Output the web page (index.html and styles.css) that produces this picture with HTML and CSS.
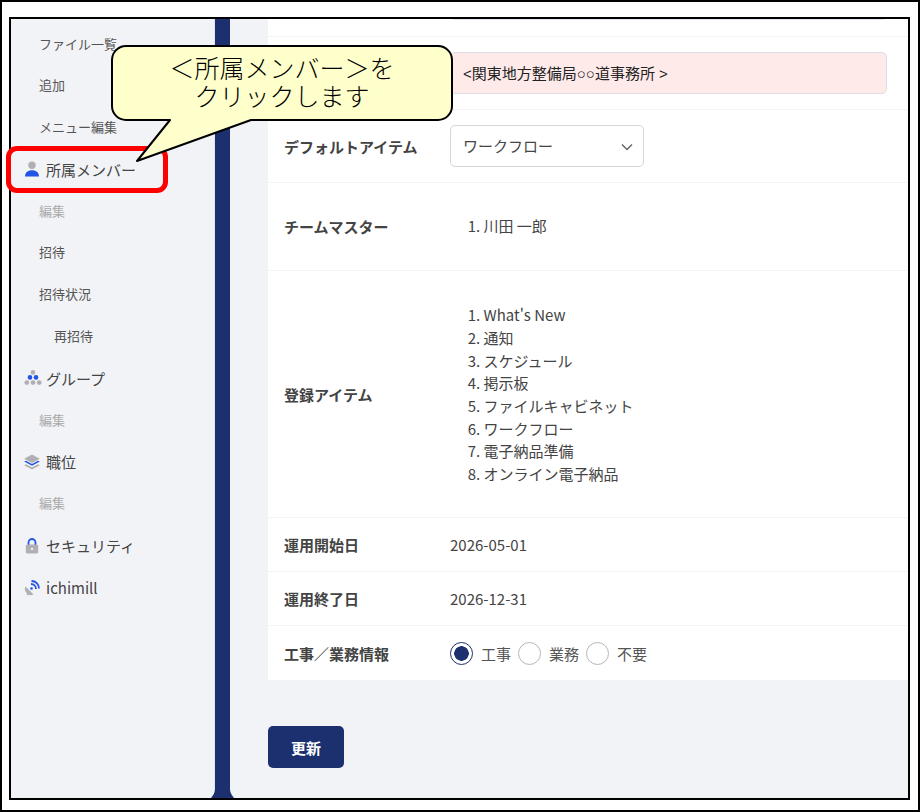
FILE: index.html
```html
<!DOCTYPE html>
<html lang="ja">
<head>
    <meta charset="UTF-8">
    <meta name="viewport" content="width=device-width, initial-scale=1.0">
    <title>所属メンバー</title>
    <link rel="stylesheet" href="styles.css">
</head>
<body>
    <div class="shot-outer">
        <div class="shot-inner">
            <nav class="sidebar">
                <a class="nav-sub">ファイル一覧</a>
                <a class="nav-sub">追加</a>
                <a class="nav-sub">メニュー編集</a>
                <a class="nav-main">
                    <svg class="nav-icon" viewBox="0 0 16 16">
                        <circle cx="8" cy="4.2" r="3.7" fill="#b0b0b4"/>
                        <path d="M1 15.5c0-4 2.6-6.3 7-6.3s7 2.300 7 6.300z" fill="#2454e6"/>
                    </svg>
                    <span>所属メンバー</span>
                </a>
                <a class="nav-sub muted">編集</a>
                <a class="nav-sub">招待</a>
                <a class="nav-sub">招待状況</a>
                <a class="nav-sub nested">再招待</a>
                <a class="nav-main">
                    <svg class="nav-icon nav-icon-wide" viewBox="0 0 18 16">
                        <circle cx="9" cy="2.4" r="2.3" fill="#b0b0b4"/>
                        <circle cx="6" cy="7.4" r="2.3" fill="#2454e6"/>
                        <circle cx="12" cy="7.4" r="2.3" fill="#2454e6"/>
                        <circle cx="2.8" cy="12.6" r="2.4" fill="#b0b0b4"/>
                        <circle cx="9" cy="12.6" r="2.4" fill="#b0b0b4"/>
                        <circle cx="15.2" cy="12.6" r="2.4" fill="#b0b0b4"/>
                    </svg>
                    <span>グループ</span>
                </a>
                <a class="nav-sub muted">編集</a>
                <a class="nav-main">
                    <svg class="nav-icon" viewBox="0 0 16 16">
                        <path d="M8 .5l7.800 4.200L8 8.900.2 4.700z" fill="#b0b0b4"/>
                        <path d="M.2 7.600l1.800-.9L8 9.900l6-3.200 1.800.9L8 11.800z" fill="#2454e6"/>
                        <path d="M.2 11.200l1.800-.9 6 3.200 6-3.200 1.800.9L8 15.400z" fill="#b0b0b4"/>
                    </svg>
                    <span>職位</span>
                </a>
                <a class="nav-sub muted">編集</a>
                <a class="nav-main">
                    <svg class="nav-icon" viewBox="0 0 16 16">
                        <path d="M4.500 7V4.500a3.500 3.500 0 0 1 7 0V7" fill="none" stroke="#2454e6" stroke-width="1.800"/>
                        <rect x="1.800" y="6.500" width="12.400" height="9" rx="1.500" fill="#b0b0b4"/>
                        <circle cx="8" cy="11" r="1.200" fill="#f2f3f7"/>
                    </svg>
                    <span>セキュリティ</span>
                </a>
                <a class="nav-main">
                    <svg class="nav-icon" viewBox="0 0 16 16">
                        <path d="M1.500 6.500a6 6 0 0 0 8 8z" fill="#b0b0b4"/>
                        <path d="M3 15l3.500-3.500" stroke="#b0b0b4" stroke-width="1.600"/>
                        <path d="M7 4a5 5 0 0 1 5 5" fill="none" stroke="#2454e6" stroke-width="1.800"/>
                        <path d="M7.500 1a7.500 7.500 0 0 1 7.500 7.500" fill="none" stroke="#2454e6" stroke-width="1.800"/>
                        <circle cx="7.500" cy="8.500" r="1.300" fill="#2454e6"/>
                    </svg>
                    <span>ichimill</span>
                </a>
            </nav>

            <div class="divider-bar">
                <svg class="divider-foot" viewBox="0 0 23 9">
                    <path d="M4 0h15c0 4 2 6 4 9H0c2-3 4-5 4-9z" fill="#1c2f6e"/>
                </svg>
            </div>

            <main class="content">
                <section class="card">
                    <div class="row row-cut">
                        <div class="row-value"><div class="cut-input"></div></div>
                    </div>
                    <div class="row row-field">
                        <div class="row-label"></div>
                        <div class="row-value"><div class="name-input">&lt;関東地方整備局○○道事務所 &gt;</div></div>
                    </div>
                    <div class="row row-field">
                        <div class="row-label">デフォルトアイテム</div>
                        <div class="row-value">
                            <div class="select-wrap">
                                <select class="item-select">
                                    <option>ワークフロー</option>
                                </select>
                                <svg class="select-chevron" viewBox="0 0 12 8">
                                    <path d="M1 1.500l5 5 5-5" fill="none" stroke="#666" stroke-width="1.500"/>
                                </svg>
                            </div>
                        </div>
                    </div>
                    <div class="row row-master">
                        <div class="row-label">チームマスター</div>
                        <div class="row-value">
                            <ol class="plain-list">
                                <li>川田 一郎</li>
                            </ol>
                        </div>
                    </div>
                    <div class="row row-items">
                        <div class="row-label">登録アイテム</div>
                        <div class="row-value">
                            <ol class="plain-list">
                                <li>What's New</li>
                                <li>通知</li>
                                <li>スケジュール</li>
                                <li>掲示板</li>
                                <li>ファイルキャビネット</li>
                                <li>ワークフロー</li>
                                <li>電子納品準備</li>
                                <li>オンライン電子納品</li>
                            </ol>
                        </div>
                    </div>
                    <div class="row row-date">
                        <div class="row-label">運用開始日</div>
                        <div class="row-value">2026-05-01</div>
                    </div>
                    <div class="row row-date">
                        <div class="row-label">運用終了日</div>
                        <div class="row-value">2026-12-31</div>
                    </div>
                    <div class="row row-date row-last">
                        <div class="row-label">工事／業務情報</div>
                        <div class="row-value radios">
                            <label class="radio"><span class="radio-mark checked"></span>工事</label>
                            <label class="radio"><span class="radio-mark"></span>業務</label>
                            <label class="radio"><span class="radio-mark"></span>不要</label>
                        </div>
                    </div>
                </section>
                <button class="update-btn">更新</button>
            </main>
        </div>

        <!-- annotation drawn over the screenshot -->
        <div class="red-mark"></div>
        <div class="callout">
            <svg class="callout-shape" viewBox="0 0 350 124">
                <path d="M17 3H329a14 14 0 0 1 14 14V63a14 14 0 0 1-14 14H142L28 118 61 77H17A14 14 0 0 1 3 63V17A14 14 0 0 1 17 3z" fill="#ffffcc" stroke="#000" stroke-width="2" stroke-linejoin="round"/>
            </svg>
            <p class="callout-text">＜所属メンバー＞を<br>クリックします</p>
        </div>
    </div>
</body>
</html>
```

FILE: styles.css
```css
:root {
    --navy: #1c2f6e;
    --page-bg: #f2f3f7;
    --text-color: #444;
    --sub-color: #555;
    --line-color: #f2f3f7;
}

* {
    box-sizing: border-box;
}

body {
    margin: 0;
    font-family: "Noto Sans CJK JP", "Noto Sans", sans-serif;
    color: var(--text-color);
}

.shot-outer {
    position: relative;
    width: 920px;
    height: 812px;
    border: 2px solid #000;
    padding: 15px 8px 10px 7px;
    background: #fff;
    overflow: hidden;
}

.shot-inner {
    display: flex;
    height: 100%;
    border: 2px solid #000;
    background: var(--page-bg);
    overflow: hidden;
}

/* sidebar */
.sidebar {
    width: 204px;
    flex-shrink: 0;
    display: flex;
    flex-direction: column;
    padding-top: 3.4px;
    border-right: 1px solid #e4e6ef;
}

.nav-sub {
    display: flex;
    align-items: center;
    height: 41.7px;
    padding-left: 28px;
    font-size: 13px;
    color: var(--sub-color);
}

.nav-sub.muted {
    color: #aaa;
}

.nav-sub.nested {
    padding-left: 43px;
}

.nav-main {
    display: flex;
    align-items: center;
    gap: 6px;
    height: 42px;
    padding: 2px 0 0 13px;
    font-size: 15px;
    color: var(--text-color);
}

.nav-icon {
    width: 16px;
    height: 16px;
    flex-shrink: 0;
}

.nav-icon-wide {
    width: 18px;
    margin-right: -2px;
}

/* dark vertical bar */
.divider-bar {
    position: relative;
    width: 15px;
    flex-shrink: 0;
    background: var(--navy);
}

.divider-foot {
    position: absolute;
    left: -4px;
    bottom: 0;
    width: 23px;
    height: 9px;
}

/* main panel */
.content {
    flex-grow: 1;
    padding-left: 38px;
    min-width: 0;
}

.card {
    background: #fff;
}

.row {
    display: flex;
    align-items: center;
    padding-left: 16px;
    border-bottom: 1px solid var(--line-color);
    font-size: 15px;
}

.row-label {
    width: 166px;
    flex-shrink: 0;
    font-weight: 700;
    font-size: 15px;
}

.row-cut {
    height: 18px;
    align-items: flex-end;
    padding-left: 182px;
    padding-bottom: 16px;
}

.cut-input {
    width: 437px;
    height: 42px;
    border: 1px solid #e4e6ef;
    border-radius: 5px;
}

.row-field {
    height: 73px;
}

.row-master {
    height: 88px;
}

.row-items {
    height: 247px;
    padding-top: 2px;
}

.row-items .row-label {
    margin-top: -1px;
}

.row-date {
    height: 54px;
}

.row-last {
    border-bottom: none;
}

.name-input {
    display: flex;
    align-items: center;
    width: 437px;
    height: 42px;
    padding: 0 0 2px 12px;
    border: 1px solid #dddde3;
    border-radius: 5px;
    background: #ffeaea;
    font-family: "Liberation Sans", "Noto Sans CJK JP", sans-serif;
    font-size: 15px;
    color: #222;
}

.select-wrap {
    position: relative;
    width: 194px;
}

.item-select {
    display: block;
    width: 100%;
    height: 42px;
    padding: 0 0 2px 12px;
    appearance: none;
    border: 1px solid #d5d6dc;
    border-radius: 5px;
    background: #fff;
    font-family: inherit;
    font-size: 15px;
    color: var(--text-color);
}

.select-chevron {
    position: absolute;
    top: 18px;
    right: 11px;
    width: 12px;
    height: 8px;
}

.plain-list {
    margin: 0;
    padding-left: 33.5px;
    line-height: 22.7px;
}

.radios {
    display: flex;
    align-items: center;
    gap: 7px;
}

.radio {
    display: flex;
    align-items: center;
    gap: 8px;
    color: var(--sub-color);
}

.radio-mark {
    width: 23px;
    height: 23px;
    border: 1px solid #b5b5bd;
    border-radius: 50%;
    background: #fff;
}

.radio-mark.checked {
    border-color: var(--navy);
    background: radial-gradient(circle, var(--navy) 0 7px, #fff 7.5px);
}

.update-btn {
    display: block;
    width: 76px;
    height: 42px;
    margin-top: 46px;
    border: none;
    border-radius: 5px;
    background: var(--navy);
    color: #fff;
    font-family: inherit;
    font-size: 15px;
    font-weight: 700;
}

/* annotation */
.red-mark {
    position: absolute;
    left: 4px;
    top: 144px;
    width: 162px;
    height: 47px;
    border: 5px solid #f00;
    border-radius: 11px;
}

.callout {
    position: absolute;
    left: 107px;
    top: 41px;
    width: 350px;
    height: 124px;
}

.callout-shape {
    display: block;
    width: 350px;
    height: 124px;
}

.callout-text {
    position: absolute;
    top: 10px;
    left: 53px;
    width: 240px;
    margin: 0;
    text-align: center;
    font-size: 25px;
    font-weight: 300;
    line-height: 28px;
    color: #000;
}
```
